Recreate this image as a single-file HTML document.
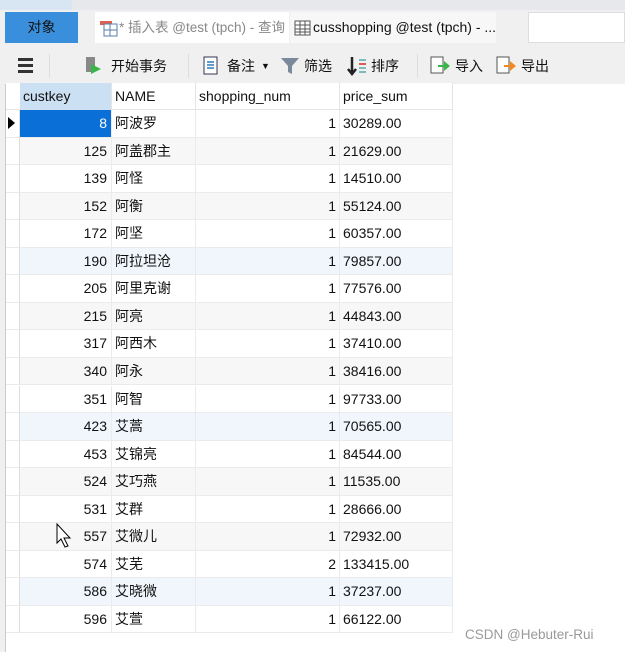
<!DOCTYPE html><html><head><meta charset="utf-8"><style>
*{margin:0;padding:0;box-sizing:border-box}
body{width:625px;height:652px;overflow:hidden;background:#f0f0f0;font-family:"Liberation Sans","Noto Sans CJK SC",sans-serif;font-size:14px;color:#111;position:relative}
.a{position:absolute}
.cell{position:absolute;height:27px;line-height:27px;white-space:nowrap;overflow:hidden}
.tab{white-space:nowrap;overflow:hidden}
</style></head><body>
<div class="a" style="left:0;top:0;width:625px;height:10px;background:#e6e8eb"></div>
<div class="a" style="left:0;top:0;width:72px;height:10px;background:#d8e6f3"></div>
<div class="a" style="left:5px;top:12px;width:73px;height:31px;background:#3a8fdc;color:#111;text-align:center;line-height:31px;font-size:14px">对象</div>
<div class="a tab" style="left:95px;top:12px;width:194px;height:31px;background:#fff;color:#888;line-height:31px;padding-left:4px;font-size:13.5px">
<svg width="20" height="18" style="vertical-align:middle"><rect x="1" y="2" width="12" height="4" fill="#e06050"/><rect x="5" y="5" width="13" height="12" fill="#fff" stroke="#5a7ea8"/><path d="M5 11H18M11 5V17" stroke="#5a7ea8"/></svg>* 插入表 @test (tpch) - 查询</div>
<div class="a tab" style="left:290px;top:12px;width:206px;height:31px;background:#f7f7f7;color:#111;line-height:31px;padding-left:3px;font-size:14px">
<svg width="20" height="18" style="vertical-align:middle"><rect x="2" y="2" width="15" height="14" fill="#fff" stroke="#555"/><path d="M2 6H17M2 10H17M2 13H17M7 2V16M12 2V16" stroke="#555"/></svg>cusshopping @test (tpch) - ...</div>
<div class="a" style="left:528px;top:12px;width:97px;height:31px;background:#fff;border:1px solid #ddd"></div>
<div class="a" style="left:5px;top:48px;width:620px;height:36px;font-size:14px;line-height:36px">
<div class="a" style="left:13px;top:10px;width:15px;height:3px;background:#333;box-shadow:0 6px 0 #333,0 12px 0 #333"></div>
<div class="a" style="left:44px;top:6px;width:1px;height:24px;background:#ddd"></div>
<svg class="a" style="left:78px;top:8px" width="20" height="20"><rect x="3" y="1" width="9" height="15" fill="#888"/><path d="M8 8L18 13L8 18Z" fill="#3ab54a"/></svg>
<div class="a" style="left:106px;top:0">开始事务</div>
<div class="a" style="left:183px;top:6px;width:1px;height:24px;background:#ddd"></div>
<svg class="a" style="left:197px;top:8px" width="18" height="20"><rect x="2" y="1" width="13" height="17" fill="#fff" stroke="#335"/><path d="M5 6H12M5 9H12M5 12H12" stroke="#2a7ab8" stroke-width="1.5"/></svg>
<div class="a" style="left:222px;top:0">备注</div>
<div class="a" style="left:256px;top:0;font-size:9px">▼</div>
<svg class="a" style="left:275px;top:8px" width="20" height="20"><path d="M1 2H19L12 10V18L8 16V10Z" fill="#7a8a9a"/></svg>
<div class="a" style="left:299px;top:0">筛选</div>
<svg class="a" style="left:342px;top:7px" width="20" height="22"><path d="M5 2V18M1 14L5 19L9 14" stroke="#222" stroke-width="2.5" fill="none"/><path d="M12 5H19M12 9H19M12 13H19M12 17H19" stroke="#5aa" stroke-width="1.5"/><path d="M12 9H19" stroke="#e33" stroke-width="1.5"/></svg>
<div class="a" style="left:366px;top:0">排序</div>
<div class="a" style="left:412px;top:6px;width:1px;height:24px;background:#ddd"></div>
<svg class="a" style="left:424px;top:7px" width="22" height="22"><rect x="2" y="2" width="12" height="16" fill="#fff" stroke="#555"/><path d="M9 10H15V6L21 11L15 16V12H9Z" fill="#3ab54a"/></svg>
<div class="a" style="left:450px;top:0">导入</div>
<svg class="a" style="left:490px;top:7px" width="22" height="22"><rect x="2" y="2" width="12" height="16" fill="#fff" stroke="#555"/><path d="M9 10H15V6L21 11L15 16V12H9Z" fill="#f08a20"/></svg>
<div class="a" style="left:516px;top:0">导出</div>
</div>
<div class="a" style="left:5px;top:84px;width:620px;height:568px;background:#fff;border-left:1px solid #ccc"></div>
<div id="g"></div>
<div class="a" style="left:465px;top:627px;color:#999;font-size:13.5px">CSDN @Hebuter-Rui</div>
<svg class="a" style="left:56px;top:523px" width="16" height="26"><path d="M1 1V20L5 16L9 24L12 23L8 15H14Z" fill="#fff" stroke="#000"/></svg>
<script>
var rows=[["8","阿波罗","1","30289.00"],["125","阿盖郡主","1","21629.00"],["139","阿怪","1","14510.00"],["152","阿衡","1","55124.00"],["172","阿坚","1","60357.00"],["190","阿拉坦沧","1","79857.00"],["205","阿里克谢","1","77576.00"],["215","阿亮","1","44843.00"],["317","阿西木","1","37410.00"],["340","阿永","1","38416.00"],["351","阿智","1","97733.00"],["423","艾蒿","1","70565.00"],["453","艾锦亮","1","84544.00"],["524","艾巧燕","1","11535.00"],["531","艾群","1","28666.00"],["557","艾微儿","1","72932.00"],["574","艾芜","2","133415.00"],["586","艾晓微","1","37237.00"],["596","艾萱","1","66122.00"]];
var h='';var ht=83;
h+='<div class="a" style="left:6px;top:'+ht+'px;width:447px;height:27px;background:#fff;border-bottom:1px solid #e4e4e4"></div>';
h+='<div class="cell" style="left:20px;top:'+ht+'px;width:92px;background:#cce0f4;padding-left:3px;border-right:1px solid #e4e4e4">custkey</div>';
var cols=[[112,84,"NAME"],[196,144,"shopping_num"],[340,113,"price_sum"]];
cols.forEach(function(c){h+='<div class="cell" style="left:'+c[0]+'px;top:'+ht+'px;width:'+c[1]+'px;padding-left:3px;border-right:1px solid #e4e4e4">'+c[2]+'</div>'});
rows.forEach(function(r,i){var y=110+i*27.55;var bg=(i==5||i==11||i==17)?'#f1f6fc':(i%2==0?'#fff':'#f7f7f7');
h+='<div class="a" style="left:20px;top:'+y+'px;width:433px;height:27.55px;background:'+bg+';border-bottom:1px solid #ebebeb"></div>';
h+='<div class="a" style="left:6px;top:'+y+'px;width:14px;height:27.55px;border-right:1px solid #ddd;border-bottom:1px solid #ebebeb"></div>';
var cb=i==0?'background:#0a6fd6;color:#fff;':'';
h+='<div class="cell" style="'+cb+'left:20px;top:'+y+'px;width:92px;text-align:right;padding-right:4px;border-right:1px solid #ebebeb">'+r[0]+'</div>';
h+='<div class="cell" style="left:112px;top:'+y+'px;width:84px;padding-left:3px;border-right:1px solid #ebebeb">'+r[1]+'</div>';
h+='<div class="cell" style="left:196px;top:'+y+'px;width:144px;text-align:right;padding-right:3px;border-right:1px solid #ebebeb">'+r[2]+'</div>';
h+='<div class="cell" style="left:340px;top:'+y+'px;width:113px;padding-left:3px;border-right:1px solid #ebebeb">'+r[3]+'</div>';
});
h+='<div class="a" style="left:8px;top:117px;width:0;height:0;border-left:7px solid #000;border-top:6px solid transparent;border-bottom:6px solid transparent"></div>';
document.getElementById('g').innerHTML=h;
</script>
</body></html>
